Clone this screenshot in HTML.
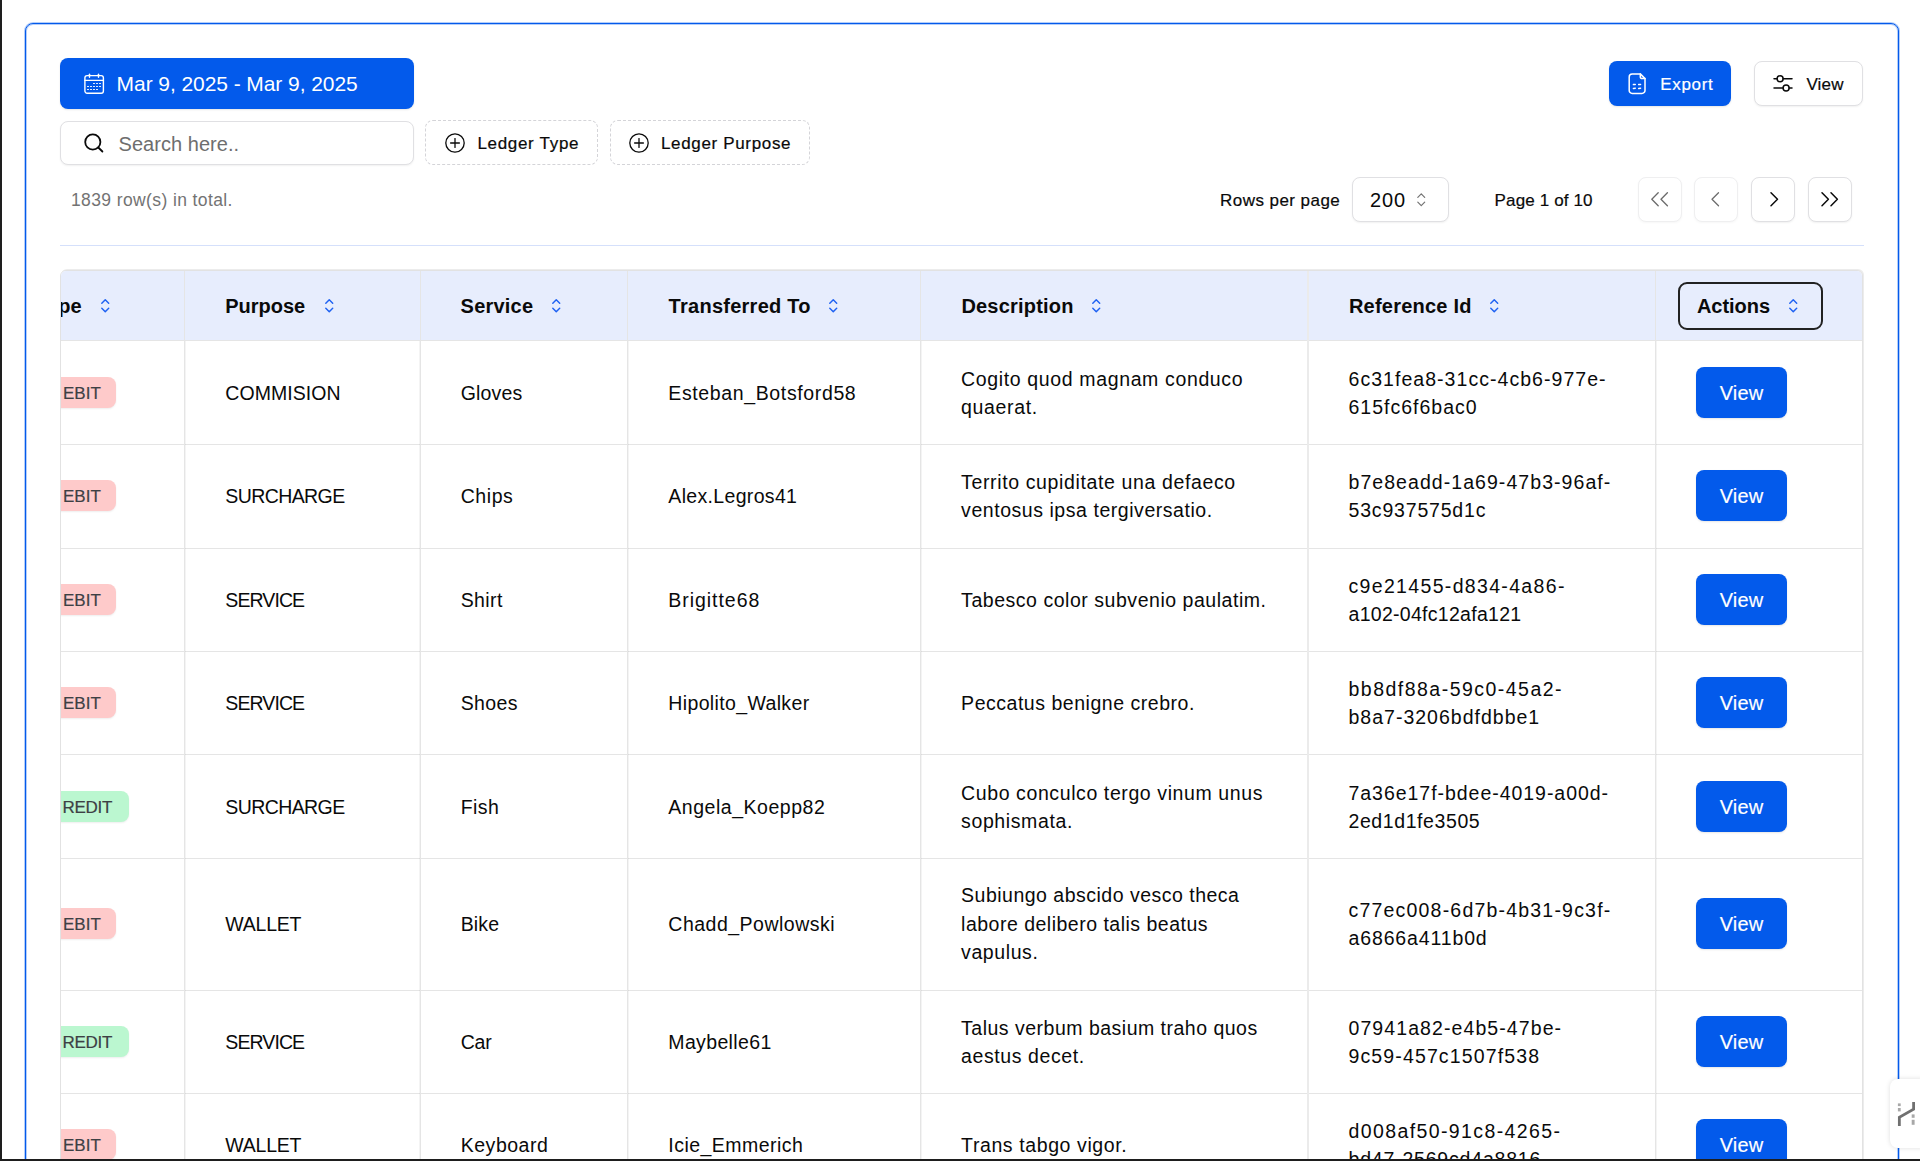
<!DOCTYPE html>
<html><head><meta charset="utf-8"><style>
*{box-sizing:border-box;margin:0;padding:0}
html,body{width:1920px;height:1161px;overflow:hidden;background:#fff}
body{font-family:"Liberation Sans",sans-serif;color:#0a0a0a;position:relative}
.b{position:absolute}
.t{position:absolute;white-space:pre;line-height:1}
svg{position:absolute;overflow:visible}
.med{-webkit-text-stroke:0.25px currentColor}
</style></head>
<body>
<div class="b" style="left:0px;top:0px;width:2px;height:1161px;background:#1e1e1e;z-index:50"></div>
<div class="b" style="left:0px;top:1159px;width:1920px;height:2px;background:#1e1e1e;z-index:50"></div>
<div class="b" style="left:25px;top:23px;width:1874px;height:1200px;border:1px solid #035aeb;border-radius:8px;background:#fff;box-shadow:0 0 0 1px rgba(3,90,235,.3), inset 0 0 0 1px rgba(3,90,235,.3)"></div>
<div class="b" style="left:60px;top:58px;width:354px;height:51px;background:#035aeb;border-radius:8px;box-shadow:0 1px 2px rgba(0,0,0,.1)"></div>
<svg style="left:84px;top:73px" width="20" height="21" viewBox="0 0 20 21" fill="none" stroke="#fff" stroke-width="1.4" stroke-linecap="round">
<rect x="0.9" y="2.6" width="18.5" height="17.6" rx="2.2"/>
<line x1="0.9" y1="7.4" x2="19.4" y2="7.4"/>
<line x1="5.5" y1="1.3" x2="5.5" y2="4.3"/><line x1="14.5" y1="1.3" x2="14.5" y2="4.3"/>
</svg>
<div class="b" style="left:93.15px;top:82.95px;width:1.7px;height:1.1px;background:#fff;border-radius:.5px"></div>
<div class="b" style="left:95.95px;top:82.95px;width:1.7px;height:1.1px;background:#fff;border-radius:.5px"></div>
<div class="b" style="left:98.95px;top:82.95px;width:1.7px;height:1.1px;background:#fff;border-radius:.5px"></div>
<div class="b" style="left:87.15px;top:85.95px;width:1.7px;height:1.1px;background:#fff;border-radius:.5px"></div>
<div class="b" style="left:89.95px;top:85.95px;width:1.7px;height:1.1px;background:#fff;border-radius:.5px"></div>
<div class="b" style="left:93.15px;top:85.95px;width:1.7px;height:1.1px;background:#fff;border-radius:.5px"></div>
<div class="b" style="left:95.95px;top:85.95px;width:1.7px;height:1.1px;background:#fff;border-radius:.5px"></div>
<div class="b" style="left:98.95px;top:85.95px;width:1.7px;height:1.1px;background:#fff;border-radius:.5px"></div>
<div class="b" style="left:87.15px;top:88.95px;width:1.7px;height:1.1px;background:#fff;border-radius:.5px"></div>
<div class="b" style="left:89.95px;top:88.95px;width:1.7px;height:1.1px;background:#fff;border-radius:.5px"></div>
<div class="b" style="left:93.15px;top:88.95px;width:1.7px;height:1.1px;background:#fff;border-radius:.5px"></div>
<div class="b" style="left:95.95px;top:88.95px;width:1.7px;height:1.1px;background:#fff;border-radius:.5px"></div>
<div class="t" style="left:116.60px;top:73.00px;font-size:21px;color:#fff;letter-spacing:-0.07px;">Mar 9, 2025 - Mar 9, 2025</div>
<div class="b" style="left:60px;top:121px;width:354px;height:44px;border:1px solid #e0e0e3;border-radius:8px;background:#fff;box-shadow:0 1px 2px rgba(0,0,0,.06)"></div>
<svg style="left:84px;top:133px" width="20" height="20" viewBox="0 0 20 20" fill="none" stroke="#0a0a0a" stroke-width="1.8" stroke-linecap="round">
<circle cx="8.8" cy="8.95" r="7.6"/><line x1="14.3" y1="14.5" x2="18.4" y2="18.5"/>
</svg>
<div class="t" style="left:118.50px;top:134.00px;font-size:20px;color:#6e6e6e;letter-spacing:0.042px;">Search here..</div>
<div class="b" style="left:425px;top:120px;width:173px;height:45px;border:1px dashed #d4d4d8;border-radius:8px;background:#fff"></div>
<svg style="left:445px;top:133px" width="20" height="20" viewBox="0 0 20 20" fill="none" stroke="#0a0a0a" stroke-width="1.3" stroke-linecap="round">
<circle cx="10" cy="10" r="9.2"/><line x1="10" y1="5.6" x2="10" y2="14.4"/><line x1="5.6" y1="10" x2="14.4" y2="10"/>
</svg>
<div class="t" style="left:477.40px;top:135.00px;font-size:17px;letter-spacing:0.69px;-webkit-text-stroke:0.2px #0a0a0a;">Ledger Type</div>
<div class="b" style="left:610px;top:120px;width:200px;height:45px;border:1px dashed #d4d4d8;border-radius:8px;background:#fff"></div>
<svg style="left:629px;top:133px" width="20" height="20" viewBox="0 0 20 20" fill="none" stroke="#0a0a0a" stroke-width="1.3" stroke-linecap="round">
<circle cx="10" cy="10" r="9.2"/><line x1="10" y1="5.6" x2="10" y2="14.4"/><line x1="5.6" y1="10" x2="14.4" y2="10"/>
</svg>
<div class="t" style="left:660.90px;top:135.00px;font-size:17px;letter-spacing:0.669px;-webkit-text-stroke:0.2px #0a0a0a;">Ledger Purpose</div>
<div class="b" style="left:1609px;top:61px;width:122px;height:45px;background:#035aeb;border-radius:8px;box-shadow:0 1px 2px rgba(0,0,0,.1)"></div>
<svg style="left:1628px;top:73px" width="18" height="21" viewBox="0 0 18 21" fill="none" stroke="#fff" stroke-width="1.5" stroke-linecap="round" stroke-linejoin="round">
<path d="M12.3 0.9H4.2A3 3 0 0 0 1.2 3.9V17.4A3 3 0 0 0 4.2 20.4H14A3 3 0 0 0 17 17.4V5.6Z"/>
<path d="M12.3 0.9V3.9A1.7 1.7 0 0 0 14 5.6H17"/>
<line x1="5.4" y1="11.6" x2="7.3" y2="11.4"/><line x1="10.7" y1="11.6" x2="12.6" y2="11.4"/>
<line x1="5.4" y1="15.4" x2="7.3" y2="15.2"/><line x1="10.7" y1="15.4" x2="12.6" y2="15.2"/>
</svg>
<div class="t" style="left:1660.20px;top:76.00px;font-size:17px;color:#fff;letter-spacing:0.7px;-webkit-text-stroke:0.2px #fff;">Export</div>
<div class="b" style="left:1754px;top:61px;width:109px;height:45px;border:1px solid #e0e0e3;border-radius:8px;background:#fff;box-shadow:0 1px 2px rgba(0,0,0,.06)"></div>
<svg style="left:1773px;top:74px" width="20" height="18" viewBox="0 0 20 18" fill="none" stroke="#0a0a0a" stroke-width="1.5" stroke-linecap="round">
<line x1="1" y1="4.8" x2="4" y2="4.8"/><line x1="10.2" y1="4.8" x2="19" y2="4.8"/><circle cx="7.1" cy="4.8" r="3"/>
<line x1="1" y1="13.9" x2="10" y2="13.9"/><line x1="16.2" y1="13.9" x2="19" y2="13.9"/><circle cx="13.1" cy="13.9" r="3"/>
</svg>
<div class="t" style="left:1806.40px;top:76.00px;font-size:17px;letter-spacing:0.167px;-webkit-text-stroke:0.2px #0a0a0a;">View</div>
<div class="t" style="left:71.00px;top:192.00px;font-size:17.5px;color:#737373;letter-spacing:0.39px;">1839 row(s) in total.</div>
<div class="t" style="left:1220.10px;top:192.00px;font-size:17px;letter-spacing:0.442px;-webkit-text-stroke:0.2px #0a0a0a;">Rows per page</div>
<div class="b" style="left:1352px;top:177px;width:97px;height:45px;border:1px solid #e0e0e3;border-radius:8px;background:#fff;box-shadow:0 1px 2px rgba(0,0,0,.06)"></div>
<div class="t" style="left:1370.00px;top:190.00px;font-size:20px;letter-spacing:0.85px;">200</div>
<svg style="left:1416.8px;top:193px" width="8.5" height="13.5" viewBox="0 0 8.5 13.5" fill="none" stroke="#737373" stroke-width="1.2" stroke-linecap="round" stroke-linejoin="round">
<polyline points="0.8,4.3 4.25,0.8 7.7,4.3"/><polyline points="0.8,9.2 4.25,12.7 7.7,9.2"/>
</svg>
<div class="t" style="left:1494.60px;top:192.00px;font-size:17px;letter-spacing:0.136px;-webkit-text-stroke:0.2px #0a0a0a;">Page 1 of 10</div>
<div class="b" style="left:1638px;top:177px;width:44px;height:45px;border:1px solid #e0e0e3;border-radius:8px;background:#fff;box-shadow:0 1px 2px rgba(0,0,0,.06);opacity:.5;"></div>
<div class="b" style="left:1694px;top:177px;width:44px;height:45px;border:1px solid #e0e0e3;border-radius:8px;background:#fff;box-shadow:0 1px 2px rgba(0,0,0,.06);opacity:.5;"></div>
<div class="b" style="left:1751px;top:177px;width:44px;height:45px;border:1px solid #e0e0e3;border-radius:8px;background:#fff;box-shadow:0 1px 2px rgba(0,0,0,.06);"></div>
<div class="b" style="left:1808px;top:177px;width:44px;height:45px;border:1px solid #e0e0e3;border-radius:8px;background:#fff;box-shadow:0 1px 2px rgba(0,0,0,.06);"></div>
<svg style="left:1651px;top:192px" width="18" height="15" viewBox="0 0 18 15" fill="none" stroke="#0a0a0a" stroke-width="1.3" stroke-linecap="round" stroke-linejoin="round" opacity=".6">
<polyline points="7.2,0.8 0.8,7.3 7.2,13.8"/><polyline points="16.4,0.8 10,7.3 16.4,13.8"/></svg>
<svg style="left:1710.5px;top:192px" width="9" height="15" viewBox="0 0 9 15" fill="none" stroke="#0a0a0a" stroke-width="1.3" stroke-linecap="round" stroke-linejoin="round" opacity=".6">
<polyline points="7.5,0.8 1,7.3 7.5,13.8"/></svg>
<svg style="left:1770px;top:192px" width="9" height="15" viewBox="0 0 9 15" fill="none" stroke="#0a0a0a" stroke-width="1.5" stroke-linecap="round" stroke-linejoin="round">
<polyline points="1,0.8 7.5,7.3 1,13.8"/></svg>
<svg style="left:1821px;top:192px" width="18" height="15" viewBox="0 0 18 15" fill="none" stroke="#0a0a0a" stroke-width="1.5" stroke-linecap="round" stroke-linejoin="round">
<polyline points="1,0.8 7.4,7.3 1,13.8"/><polyline points="10,0.8 16.4,7.3 10,13.8"/></svg>
<div class="b" style="left:60px;top:245px;width:1804px;height:1px;background:#d5e0fb"></div>
<div class="b" style="left:60px;top:270px;width:1803px;height:960px;border:1px solid #e2e2e2;border-radius:6px 6px 0 0;overflow:hidden;background:#fff;box-shadow:1px -1px 0 #ececec">
<div class="b" style="left:0.00px;top:0.00px;width:1803.00px;height:69.20px;background:#e7edfd"></div><div class="b" style="left:0.00px;top:69.20px;width:1803.00px;height:1.00px;background:#e5e5e5"></div><div class="b" style="left:0.00px;top:173.40px;width:1803.00px;height:1.00px;background:#e5e5e5"></div><div class="b" style="left:0.00px;top:276.60px;width:1803.00px;height:1.00px;background:#e5e5e5"></div><div class="b" style="left:0.00px;top:380.10px;width:1803.00px;height:1.00px;background:#e5e5e5"></div><div class="b" style="left:0.00px;top:483.30px;width:1803.00px;height:1.00px;background:#e5e5e5"></div><div class="b" style="left:0.00px;top:587.00px;width:1803.00px;height:1.00px;background:#e5e5e5"></div><div class="b" style="left:0.00px;top:718.50px;width:1803.00px;height:1.00px;background:#e5e5e5"></div><div class="b" style="left:0.00px;top:821.80px;width:1803.00px;height:1.00px;background:#e5e5e5"></div><div class="b" style="left:123.00px;top:0.00px;width:1.00px;height:1000.00px;background:#e5e5e5"></div><div class="b" style="left:124.00px;top:70.20px;width:1.00px;height:1000.00px;background:rgba(0,0,0,.045)"></div><div class="b" style="left:359.00px;top:0.00px;width:1.00px;height:1000.00px;background:#e5e5e5"></div><div class="b" style="left:358.00px;top:70.20px;width:1.00px;height:1000.00px;background:rgba(0,0,0,.045)"></div><div class="b" style="left:566.00px;top:0.00px;width:1.00px;height:1000.00px;background:#e5e5e5"></div><div class="b" style="left:567.00px;top:70.20px;width:1.00px;height:1000.00px;background:rgba(0,0,0,.045)"></div><div class="b" style="left:859.00px;top:0.00px;width:1.00px;height:1000.00px;background:#e5e5e5"></div><div class="b" style="left:860.00px;top:70.20px;width:1.00px;height:1000.00px;background:rgba(0,0,0,.045)"></div><div class="b" style="left:1594.00px;top:0.00px;width:1.00px;height:1000.00px;background:#e5e5e5"></div><div class="b" style="left:1595.00px;top:70.20px;width:1.00px;height:1000.00px;background:rgba(0,0,0,.045)"></div><div class="b" style="left:1246.00px;top:0.00px;width:2.00px;height:1000.00px;background:#ebebeb"></div><div class="t" style="left:-2.80px;top:25.00px;font-size:20px;font-weight:700;">pe</div><svg style="left:39.90px;top:28.30px" width="8.5" height="13.5" viewBox="0 0 8.5 13.5" fill="none" stroke="#1f62f2" stroke-width="1.45" stroke-linecap="round" stroke-linejoin="round">
<polyline points="0.8,4.3 4.25,0.8 7.7,4.3"/><polyline points="0.8,9.2 4.25,12.7 7.7,9.2"/></svg><div class="t" style="left:164.20px;top:25.00px;font-size:20px;font-weight:700;">Purpose</div><svg style="left:263.50px;top:28.30px" width="8.5" height="13.5" viewBox="0 0 8.5 13.5" fill="none" stroke="#1f62f2" stroke-width="1.45" stroke-linecap="round" stroke-linejoin="round">
<polyline points="0.8,4.3 4.25,0.8 7.7,4.3"/><polyline points="0.8,9.2 4.25,12.7 7.7,9.2"/></svg><div class="t" style="left:399.60px;top:25.00px;font-size:20px;font-weight:700;letter-spacing:0.217px;">Service</div><svg style="left:491.20px;top:28.30px" width="8.5" height="13.5" viewBox="0 0 8.5 13.5" fill="none" stroke="#1f62f2" stroke-width="1.45" stroke-linecap="round" stroke-linejoin="round">
<polyline points="0.8,4.3 4.25,0.8 7.7,4.3"/><polyline points="0.8,9.2 4.25,12.7 7.7,9.2"/></svg><div class="t" style="left:607.60px;top:25.00px;font-size:20px;font-weight:700;letter-spacing:0.262px;">Transferred To</div><svg style="left:768.30px;top:28.30px" width="8.5" height="13.5" viewBox="0 0 8.5 13.5" fill="none" stroke="#1f62f2" stroke-width="1.45" stroke-linecap="round" stroke-linejoin="round">
<polyline points="0.8,4.3 4.25,0.8 7.7,4.3"/><polyline points="0.8,9.2 4.25,12.7 7.7,9.2"/></svg><div class="t" style="left:900.40px;top:25.00px;font-size:20px;font-weight:700;letter-spacing:0.2px;">Description</div><svg style="left:1031.30px;top:28.30px" width="8.5" height="13.5" viewBox="0 0 8.5 13.5" fill="none" stroke="#1f62f2" stroke-width="1.45" stroke-linecap="round" stroke-linejoin="round">
<polyline points="0.8,4.3 4.25,0.8 7.7,4.3"/><polyline points="0.8,9.2 4.25,12.7 7.7,9.2"/></svg><div class="t" style="left:1287.90px;top:25.00px;font-size:20px;font-weight:700;letter-spacing:0.236px;">Reference Id</div><svg style="left:1429.00px;top:28.30px" width="8.5" height="13.5" viewBox="0 0 8.5 13.5" fill="none" stroke="#1f62f2" stroke-width="1.45" stroke-linecap="round" stroke-linejoin="round">
<polyline points="0.8,4.3 4.25,0.8 7.7,4.3"/><polyline points="0.8,9.2 4.25,12.7 7.7,9.2"/></svg><div class="b" style="left:1617.00px;top:11.00px;width:144.50px;height:48.00px;border:2px solid #222;border-radius:9px"></div><div class="t" style="left:1635.90px;top:25.00px;font-size:20px;font-weight:700;letter-spacing:-0.033px;">Actions</div><svg style="left:1727.50px;top:28.30px" width="8.5" height="13.5" viewBox="0 0 8.5 13.5" fill="none" stroke="#1f62f2" stroke-width="1.45" stroke-linecap="round" stroke-linejoin="round">
<polyline points="0.8,4.3 4.25,0.8 7.7,4.3"/><polyline points="0.8,9.2 4.25,12.7 7.7,9.2"/></svg><div class="b" style="left:-27.00px;top:106.20px;width:81.70px;height:30.80px;background:#fecaca;border-radius:8px;box-shadow:0 1px 2px rgba(0,0,0,.07)"></div><div class="t" style="left:2.00px;top:114.00px;font-size:17px;color:#3d4044;-webkit-text-stroke:0.2px #3d4044;">EBIT</div><div class="t" style="left:164.30px;top:113.00px;font-size:19.5px;letter-spacing:0.05px;">COMMISION</div><div class="t" style="left:399.70px;top:113.00px;font-size:19.5px;letter-spacing:0.16px;">Gloves</div><div class="t" style="left:607.30px;top:113.00px;font-size:19.5px;letter-spacing:0.629px;">Esteban_Botsford58</div><div class="t" style="left:900.10px;top:99.00px;font-size:19.5px;letter-spacing:0.636px;">Cogito quod magnam conduco</div><div class="t" style="left:900.10px;top:127.00px;font-size:19.5px;letter-spacing:0.657px;">quaerat.</div><div class="t" style="left:1287.50px;top:99.00px;font-size:19.5px;letter-spacing:1.043px;">6c31fea8-31cc-4cb6-977e-</div><div class="t" style="left:1287.50px;top:127.00px;font-size:19.5px;letter-spacing:1.0px;">615fc6f6bac0</div><div class="b" style="left:1635.00px;top:96.00px;width:90.60px;height:51.00px;background:#035aeb;border-radius:8px;box-shadow:0 1px 2px rgba(0,0,0,.1)"></div><div class="t" style="left:1658.70px;top:112.00px;font-size:20px;color:#fff;letter-spacing:0.167px;-webkit-text-stroke:0.15px #fff;">View</div><div class="b" style="left:-27.00px;top:209.40px;width:81.70px;height:30.80px;background:#fecaca;border-radius:8px;box-shadow:0 1px 2px rgba(0,0,0,.07)"></div><div class="t" style="left:2.00px;top:217.00px;font-size:17px;color:#3d4044;-webkit-text-stroke:0.2px #3d4044;">EBIT</div><div class="t" style="left:164.30px;top:216.00px;font-size:19.5px;letter-spacing:-0.587px;">SURCHARGE</div><div class="t" style="left:399.70px;top:216.00px;font-size:19.5px;letter-spacing:0.575px;">Chips</div><div class="t" style="left:607.30px;top:216.00px;font-size:19.5px;letter-spacing:0.333px;">Alex.Legros41</div><div class="t" style="left:900.10px;top:202.00px;font-size:19.5px;letter-spacing:0.628px;">Territo cupiditate una defaeco</div><div class="t" style="left:900.10px;top:230.00px;font-size:19.5px;letter-spacing:0.548px;">ventosus ipsa tergiversatio.</div><div class="t" style="left:1287.50px;top:202.00px;font-size:19.5px;letter-spacing:1.057px;">b7e8eadd-1a69-47b3-96af-</div><div class="t" style="left:1287.50px;top:230.00px;font-size:19.5px;letter-spacing:0.818px;">53c937575d1c</div><div class="b" style="left:1635.00px;top:199.20px;width:90.60px;height:51.00px;background:#035aeb;border-radius:8px;box-shadow:0 1px 2px rgba(0,0,0,.1)"></div><div class="t" style="left:1658.70px;top:215.00px;font-size:20px;color:#fff;letter-spacing:0.167px;-webkit-text-stroke:0.15px #fff;">View</div><div class="b" style="left:-27.00px;top:313.40px;width:81.70px;height:30.80px;background:#fecaca;border-radius:8px;box-shadow:0 1px 2px rgba(0,0,0,.07)"></div><div class="t" style="left:2.00px;top:321.00px;font-size:17px;color:#3d4044;-webkit-text-stroke:0.2px #3d4044;">EBIT</div><div class="t" style="left:164.30px;top:320.00px;font-size:19.5px;letter-spacing:-0.917px;">SERVICE</div><div class="t" style="left:399.70px;top:320.00px;font-size:19.5px;letter-spacing:0.4px;">Shirt</div><div class="t" style="left:607.30px;top:320.00px;font-size:19.5px;letter-spacing:0.956px;">Brigitte68</div><div class="t" style="left:900.10px;top:320.00px;font-size:19.5px;letter-spacing:0.535px;">Tabesco color subvenio paulatim.</div><div class="t" style="left:1287.50px;top:306.00px;font-size:19.5px;letter-spacing:1.333px;">c9e21455-d834-4a86-</div><div class="t" style="left:1287.50px;top:334.00px;font-size:19.5px;letter-spacing:0.287px;">a102-04fc12afa121</div><div class="b" style="left:1635.00px;top:303.20px;width:90.60px;height:51.00px;background:#035aeb;border-radius:8px;box-shadow:0 1px 2px rgba(0,0,0,.1)"></div><div class="t" style="left:1658.70px;top:319.00px;font-size:20px;color:#fff;letter-spacing:0.167px;-webkit-text-stroke:0.15px #fff;">View</div><div class="b" style="left:-27.00px;top:416.40px;width:81.70px;height:30.80px;background:#fecaca;border-radius:8px;box-shadow:0 1px 2px rgba(0,0,0,.07)"></div><div class="t" style="left:2.00px;top:424.00px;font-size:17px;color:#3d4044;-webkit-text-stroke:0.2px #3d4044;">EBIT</div><div class="t" style="left:164.30px;top:423.00px;font-size:19.5px;letter-spacing:-0.917px;">SERVICE</div><div class="t" style="left:399.70px;top:423.00px;font-size:19.5px;letter-spacing:0.375px;">Shoes</div><div class="t" style="left:607.30px;top:423.00px;font-size:19.5px;letter-spacing:0.357px;">Hipolito_Walker</div><div class="t" style="left:900.10px;top:423.00px;font-size:19.5px;letter-spacing:0.526px;">Peccatus benigne crebro.</div><div class="t" style="left:1287.50px;top:409.00px;font-size:19.5px;letter-spacing:1.478px;">bb8df88a-59c0-45a2-</div><div class="t" style="left:1287.50px;top:437.00px;font-size:19.5px;letter-spacing:1.006px;">b8a7-3206bdfdbbe1</div><div class="b" style="left:1635.00px;top:406.20px;width:90.60px;height:51.00px;background:#035aeb;border-radius:8px;box-shadow:0 1px 2px rgba(0,0,0,.1)"></div><div class="t" style="left:1658.70px;top:422.00px;font-size:20px;color:#fff;letter-spacing:0.167px;-webkit-text-stroke:0.15px #fff;">View</div><div class="b" style="left:-27.00px;top:520.40px;width:94.60px;height:30.60px;background:#bbf7d0;border-radius:8px;box-shadow:0 1px 2px rgba(0,0,0,.07)"></div><div class="t" style="left:1.60px;top:528.00px;font-size:17px;color:#3d4044;letter-spacing:-0.3px;-webkit-text-stroke:0.2px #3d4044;">REDIT</div><div class="t" style="left:164.30px;top:527.00px;font-size:19.5px;letter-spacing:-0.587px;">SURCHARGE</div><div class="t" style="left:399.70px;top:527.00px;font-size:19.5px;letter-spacing:0.4px;">Fish</div><div class="t" style="left:607.30px;top:527.00px;font-size:19.5px;letter-spacing:0.531px;">Angela_Koepp82</div><div class="t" style="left:900.10px;top:513.00px;font-size:19.5px;letter-spacing:0.597px;">Cubo conculco tergo vinum unus</div><div class="t" style="left:900.10px;top:541.00px;font-size:19.5px;letter-spacing:0.61px;">sophismata.</div><div class="t" style="left:1287.50px;top:513.00px;font-size:19.5px;letter-spacing:0.961px;">7a36e17f-bdee-4019-a00d-</div><div class="t" style="left:1287.50px;top:541.00px;font-size:19.5px;letter-spacing:0.591px;">2ed1d1fe3505</div><div class="b" style="left:1635.00px;top:510.20px;width:90.60px;height:51.00px;background:#035aeb;border-radius:8px;box-shadow:0 1px 2px rgba(0,0,0,.1)"></div><div class="t" style="left:1658.70px;top:526.00px;font-size:20px;color:#fff;letter-spacing:0.167px;-webkit-text-stroke:0.15px #fff;">View</div><div class="b" style="left:-27.00px;top:637.00px;width:81.70px;height:30.80px;background:#fecaca;border-radius:8px;box-shadow:0 1px 2px rgba(0,0,0,.07)"></div><div class="t" style="left:2.00px;top:645.00px;font-size:17px;color:#3d4044;-webkit-text-stroke:0.2px #3d4044;">EBIT</div><div class="t" style="left:164.30px;top:644.00px;font-size:19.5px;letter-spacing:-0.22px;">WALLET</div><div class="t" style="left:399.70px;top:644.00px;font-size:19.5px;letter-spacing:0.133px;">Bike</div><div class="t" style="left:607.30px;top:644.00px;font-size:19.5px;letter-spacing:0.5px;">Chadd_Powlowski</div><div class="t" style="left:900.10px;top:615.00px;font-size:19.5px;letter-spacing:0.493px;">Subiungo abscido vesco theca</div><div class="t" style="left:900.10px;top:644.00px;font-size:19.5px;letter-spacing:0.493px;">labore delibero talis beatus</div><div class="t" style="left:900.10px;top:672.00px;font-size:19.5px;letter-spacing:0.586px;">vapulus.</div><div class="t" style="left:1287.50px;top:630.00px;font-size:19.5px;letter-spacing:1.2px;">c77ec008-6d7b-4b31-9c3f-</div><div class="t" style="left:1287.50px;top:658.00px;font-size:19.5px;letter-spacing:0.864px;">a6866a411b0d</div><div class="b" style="left:1635.00px;top:626.80px;width:90.60px;height:51.00px;background:#035aeb;border-radius:8px;box-shadow:0 1px 2px rgba(0,0,0,.1)"></div><div class="t" style="left:1658.70px;top:643.00px;font-size:20px;color:#fff;letter-spacing:0.167px;-webkit-text-stroke:0.15px #fff;">View</div><div class="b" style="left:-27.00px;top:755.40px;width:94.60px;height:30.60px;background:#bbf7d0;border-radius:8px;box-shadow:0 1px 2px rgba(0,0,0,.07)"></div><div class="t" style="left:1.60px;top:763.00px;font-size:17px;color:#3d4044;letter-spacing:-0.3px;-webkit-text-stroke:0.2px #3d4044;">REDIT</div><div class="t" style="left:164.30px;top:762.00px;font-size:19.5px;letter-spacing:-0.917px;">SERVICE</div><div class="t" style="left:399.70px;top:762.00px;font-size:19.5px;letter-spacing:-0.15px;">Car</div><div class="t" style="left:607.30px;top:762.00px;font-size:19.5px;letter-spacing:0.356px;">Maybelle61</div><div class="t" style="left:900.10px;top:748.00px;font-size:19.5px;letter-spacing:0.493px;">Talus verbum basium traho quos</div><div class="t" style="left:900.10px;top:776.00px;font-size:19.5px;letter-spacing:0.592px;">aestus decet.</div><div class="t" style="left:1287.50px;top:748.00px;font-size:19.5px;letter-spacing:1.089px;">07941a82-e4b5-47be-</div><div class="t" style="left:1287.50px;top:776.00px;font-size:19.5px;letter-spacing:1.131px;">9c59-457c1507f538</div><div class="b" style="left:1635.00px;top:745.20px;width:90.60px;height:51.00px;background:#035aeb;border-radius:8px;box-shadow:0 1px 2px rgba(0,0,0,.1)"></div><div class="t" style="left:1658.70px;top:761.00px;font-size:20px;color:#fff;letter-spacing:0.167px;-webkit-text-stroke:0.15px #fff;">View</div><div class="b" style="left:-27.00px;top:858.10px;width:81.70px;height:30.80px;background:#fecaca;border-radius:8px;box-shadow:0 1px 2px rgba(0,0,0,.07)"></div><div class="t" style="left:2.00px;top:866.00px;font-size:17px;color:#3d4044;-webkit-text-stroke:0.2px #3d4044;">EBIT</div><div class="t" style="left:164.30px;top:865.00px;font-size:19.5px;letter-spacing:-0.22px;">WALLET</div><div class="t" style="left:399.70px;top:865.00px;font-size:19.5px;letter-spacing:0.529px;">Keyboard</div><div class="t" style="left:607.30px;top:865.00px;font-size:19.5px;letter-spacing:0.467px;">Icie_Emmerich</div><div class="t" style="left:900.10px;top:865.00px;font-size:19.5px;letter-spacing:0.6px;">Trans tabgo vigor.</div><div class="t" style="left:1287.50px;top:851.00px;font-size:19.5px;letter-spacing:1.394px;">d008af50-91c8-4265-</div><div class="t" style="left:1287.50px;top:879.00px;font-size:19.5px;letter-spacing:0.808px;">bd47-2569cd4a8816</div><div class="b" style="left:1635.00px;top:847.90px;width:90.60px;height:51.00px;background:#035aeb;border-radius:8px;box-shadow:0 1px 2px rgba(0,0,0,.1)"></div><div class="t" style="left:1658.70px;top:864.00px;font-size:20px;color:#fff;letter-spacing:0.167px;-webkit-text-stroke:0.15px #fff;">View</div>
</div>
<div class="b" style="left:1890px;top:1079px;width:40px;height:69px;background:#fff;border-radius:8px;box-shadow:0 0 5px rgba(0,0,0,.13);z-index:40"></div>
<svg style="left:1896px;top:1100px;z-index:41" width="20" height="28" viewBox="0 0 20 28" fill="none">
<path d="M3.35 26V17.2L17.6 9.2V2" stroke="#707070" stroke-width="2.8" stroke-linejoin="miter"/>
<rect x="1.9" y="3.4" width="2.8" height="2.7" fill="#a8a8a8"/><rect x="1.9" y="8" width="2.8" height="3.4" fill="#a8a8a8"/>
<rect x="15.7" y="14.4" width="2.9" height="3.4" fill="#a8a8a8"/><rect x="15.7" y="19.8" width="2.9" height="5" fill="#a8a8a8"/>
</svg>
</body></html>
